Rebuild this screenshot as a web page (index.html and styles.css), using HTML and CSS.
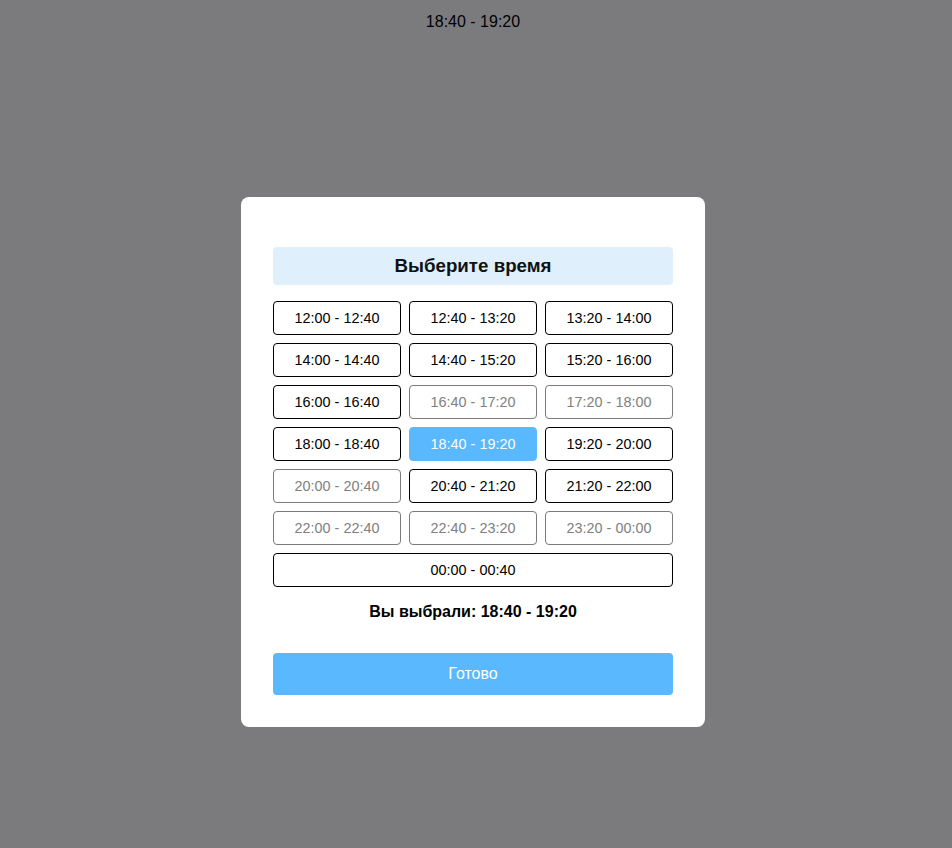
FILE: index.html
```html
<!DOCTYPE html>
<html lang="ru">
<head>
<meta charset="utf-8">
<link rel="stylesheet" href="styles.css">
</head>
<body>
<div class="page">
  <div class="current">18:40 - 19:20</div>
</div>
<div class="overlay">
  <div class="modal">
    <div class="title">Выберите время</div>
    <div class="grid">
      <button class="slot">12:00 - 12:40</button>
      <button class="slot">12:40 - 13:20</button>
      <button class="slot">13:20 - 14:00</button>
      <button class="slot">14:00 - 14:40</button>
      <button class="slot">14:40 - 15:20</button>
      <button class="slot">15:20 - 16:00</button>
      <button class="slot">16:00 - 16:40</button>
      <button class="slot disabled">16:40 - 17:20</button>
      <button class="slot disabled">17:20 - 18:00</button>
      <button class="slot">18:00 - 18:40</button>
      <button class="slot selected">18:40 - 19:20</button>
      <button class="slot">19:20 - 20:00</button>
      <button class="slot disabled">20:00 - 20:40</button>
      <button class="slot">20:40 - 21:20</button>
      <button class="slot">21:20 - 22:00</button>
      <button class="slot disabled">22:00 - 22:40</button>
      <button class="slot disabled">22:40 - 23:20</button>
      <button class="slot disabled">23:20 - 00:00</button>
      <button class="slot wide">00:00 - 00:40</button>
    </div>
    <div class="chosen">Вы выбрали: 18:40 - 19:20</div>
    <button class="done">Готово</button>
  </div>
</div>
</body>
</html>
```
FILE: styles.css
```css
html, body {
  margin: 0;
  padding: 0;
  background: #ffffff;
  font-family: "Liberation Sans", Arial, sans-serif;
}
.page {
  padding-top: 13px;
  padding-right: 6px;
  text-align: center;
}
.current {
  font-size: 16px;
  line-height: 18px;
  color: #000;
}
.overlay {
  position: fixed;
  inset: 0;
  background: rgba(2, 2, 6, 0.52);
  display: flex;
  justify-content: center;
  align-items: flex-start;
  padding-top: 197px;
  padding-right: 6px;
}
.modal {
  width: 400px;
  background: #fff;
  border-radius: 8px;
  padding: 50px 32px 32px;
  display: flex;
  flex-direction: column;
}
.title {
  height: 38px;
  line-height: 38px;
  background: #dff0fc;
  border-radius: 4px;
  text-align: center;
  font-size: 18.72px;
  font-weight: bold;
  color: #111;
}
.grid {
  margin-top: 16px;
  display: grid;
  grid-template-columns: repeat(3, 1fr);
  gap: 8px;
}
.slot {
  height: 34px;
  border: 1px solid #000;
  border-radius: 4px;
  background: #fff;
  font-family: "Liberation Sans", Arial, sans-serif;
  font-size: 14.4px;
  color: #000;
  padding: 0;
}
.slot.disabled {
  border-color: #7a7a7a;
  color: #808080;
}
.slot.selected {
  background: #5ab8fe;
  border-color: #5ab8fe;
  color: #fff;
}
.slot.wide {
  grid-column: 1 / -1;
}
.chosen {
  margin-top: 16px;
  text-align: center;
  font-size: 16px;
  font-weight: bold;
  line-height: 18px;
  color: #000;
}
.done {
  margin-top: 32px;
  height: 42px;
  border: none;
  border-radius: 4px;
  background: #5ab8fe;
  color: #fff;
  font-family: "Liberation Sans", Arial, sans-serif;
  font-size: 16px;
}
```
